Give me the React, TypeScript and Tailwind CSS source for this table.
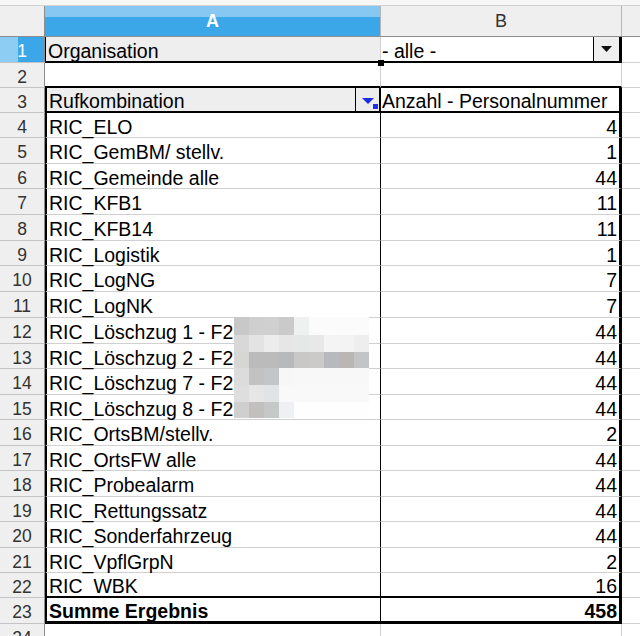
import React from 'react';

type Row = { n: number; label: string; value: number; h: string };

const dataRows: Row[] = [
  { n: 4, label: 'RIC_ELO', value: 4, h: 'h-[25px]' },
  { n: 5, label: 'RIC_GemBM/ stellv.', value: 1, h: 'h-[26px]' },
  { n: 6, label: 'RIC_Gemeinde alle', value: 44, h: 'h-[25px]' },
  { n: 7, label: 'RIC_KFB1', value: 11, h: 'h-[26px]' },
  { n: 8, label: 'RIC_KFB14', value: 11, h: 'h-[26px]' },
  { n: 9, label: 'RIC_Logistik', value: 1, h: 'h-[25px]' },
  { n: 10, label: 'RIC_LogNG', value: 7, h: 'h-[26px]' },
  { n: 11, label: 'RIC_LogNK', value: 7, h: 'h-[26px]' },
  { n: 12, label: 'RIC_Löschzug 1 - F2', value: 44, h: 'h-[26px]' },
  { n: 13, label: 'RIC_Löschzug 2 - F2', value: 44, h: 'h-[25px]' },
  { n: 14, label: 'RIC_Löschzug 7 - F2', value: 44, h: 'h-[26px]' },
  { n: 15, label: 'RIC_Löschzug 8 - F2', value: 44, h: 'h-[25px]' },
  { n: 16, label: 'RIC_OrtsBM/stellv.', value: 2, h: 'h-[26px]' },
  { n: 17, label: 'RIC_OrtsFW alle', value: 44, h: 'h-[25px]' },
  { n: 18, label: 'RIC_Probealarm', value: 44, h: 'h-[26px]' },
  { n: 19, label: 'RIC_Rettungssatz', value: 44, h: 'h-[25px]' },
  { n: 20, label: 'RIC_Sonderfahrzeug', value: 44, h: 'h-[26px]' },
  { n: 21, label: 'RIC_VpflGrpN', value: 2, h: 'h-[25px]' },
  { n: 22, label: 'RIC_WBK', value: 16, h: 'h-[25px]' },
];

// verpixelter Bereich über Zeilen 12-15
const mosaic: string[][] = [
  ['bg-[#c8c8c8]', 'bg-[#cfcfcf]', 'bg-[#d0d0d0]', 'bg-[#cacaca]', 'bg-[#eff0f0]', 'bg-[#fbfbfb]', 'bg-[#fbfbfb]', 'bg-[#fbfbfb]', 'bg-[#fbfbfb]'],
  ['bg-[#d8d8d8]', 'bg-[#e3e3e3]', 'bg-[#ececec]', 'bg-[#e6e6e6]', 'bg-[#e6e8e8]', 'bg-[#e8e8e8]', 'bg-[#f4f4f4]', 'bg-[#f3f3f3]', 'bg-[#eeeeee]'],
  ['bg-[#d6d6d4]', 'bg-[#bbbbbb]', 'bg-[#bbbbbb]', 'bg-[#b8b9bd]', 'bg-[#c9c8c6]', 'bg-[#cbcac8]', 'bg-[#b8b9bd]', 'bg-[#b9b6b4]', 'bg-[#c3c4c6]'],
  ['bg-[#dcdcdc]', 'bg-[#c2c2c2]', 'bg-[#c4c5c9]', 'bg-[#f7f7f7]', 'bg-[#f8f8f8]', 'bg-[#f8f8f8]', 'bg-[#f8f8f8]', 'bg-[#f8f8f8]', 'bg-[#f8f8f8]'],
  ['bg-[#dedede]', 'bg-[#e6e6e6]', 'bg-[#e2e3e5]', 'bg-[#f9f9f9]', 'bg-[#f9f9f9]', 'bg-[#f9f9f9]', 'bg-[#f9f9f9]', 'bg-[#f9f9f9]', 'bg-[#f9f9f9]'],
  ['bg-[#cfcfcf]', 'bg-[#c2bfbe]', 'bg-[#c4c8c6]', 'bg-[#eef0f4]', 'bg-[#fefefe]', 'bg-[#fefefe]', 'bg-[#fefefe]', 'bg-[#fefefe]', 'bg-[#fefefe]'],
];

const rowHead =
  'w-[45px] shrink-0 flex items-center justify-center pt-[3px] border-r border-r-[#8e8e8e] border-b border-b-[#c3c3c3] bg-[#efefef] text-[17.5px] text-[#333333]';

const App: React.FC = () => {
  return (
    <div className="relative w-[640px] h-[636px] overflow-hidden bg-white font-['Liberation_Sans',Arial,sans-serif] text-[19.5px] text-black leading-[24px]">
      {/* obere Leiste */}
      <div className="h-[6px] bg-[#f7f7f7] border-b border-b-[#d2d2d2]" />

      {/* Spaltenköpfe */}
      <div className="flex h-[31px] border-b border-b-[#8e8e8e] bg-[#efefef] text-[18px]">
        <div className="w-[45px] shrink-0 border-r border-r-[#8e8e8e]" />
        <div className="w-[336px] shrink-0 flex items-center justify-center border-r border-r-[#b5b5b5] bg-[linear-gradient(to_bottom,#86c8f2_36%,#3ba6e8_36%)] text-white font-bold">
          A
        </div>
        <div className="w-[241px] shrink-0 flex items-center justify-center border-r border-r-[#b5b5b5] text-[#333333]">
          B
        </div>
        <div className="flex-1" />
      </div>

      {/* Zeile 1: Seitenfeld */}
      <div className="flex h-[26px]">
        <div className="w-[45px] shrink-0 flex items-center justify-center pt-[3px] border-r border-r-[#8e8e8e] border-b border-b-[#c3c3c3] bg-[linear-gradient(to_right,#8ecdf3_40%,#3ba6e8_40%)] text-[17.5px] text-white">
          1
        </div>
        <div className="relative w-[336px] shrink-0 flex items-center pl-[2px] pt-[3px] bg-[#eeeeee] border-l border-l-black border-r border-r-[#d0d0d0] border-b-2 border-b-black">
          Organisation
          <div className="absolute -right-[4px] -bottom-[5px] w-[6px] h-[6px] bg-black" />
        </div>
        <div className="w-[241px] shrink-0 flex items-stretch pl-[1px] border-r-[3px] border-r-black border-b-2 border-b-black">
          <span className="flex items-center pt-[3px]">- alle -</span>
          <div className="ml-auto w-[26px] flex items-center justify-center bg-[#efefef] border-l border-l-black">
            <svg width="11" height="6" viewBox="0 0 11 6">
              <path d="M0 0 L11 0 L5.5 6 Z" fill="#111111" />
            </svg>
          </div>
        </div>
        <div className="flex-1 border-b border-b-[#d0d0d0]" />
      </div>

      {/* Zeile 2 */}
      <div className="flex h-[25px]">
        <div className={rowHead}>2</div>
        <div className="w-[336px] shrink-0 border-r border-r-[#d0d0d0] border-b-2 border-b-black" />
        <div className="w-[241px] shrink-0 border-r border-r-[#d0d0d0] border-b-2 border-b-black" />
        <div className="flex-1 border-b border-b-[#d0d0d0]" />
      </div>

      {/* Zeile 3: Kopf der Pivot-Tabelle */}
      <div className="flex h-[25px]">
        <div className={rowHead}>3</div>
        <div className="w-[336px] shrink-0 flex items-stretch pl-[2px] bg-[#eeeeee] border-l-2 border-l-black border-r border-r-black border-b-2 border-b-black">
          <span className="flex items-center pt-[3px]">Rufkombination</span>
          <div className="relative ml-auto w-[25px] flex items-center justify-center bg-[#ececec] border-l border-l-black border-r border-r-black">
            <svg width="12" height="6" viewBox="0 0 12 6" className="mt-[2px]">
              <path d="M0 0 L12 0 L6 6 Z" fill="#1c2be0" />
            </svg>
            <div className="absolute right-[1px] bottom-[2px] w-[5px] h-[5px] bg-[#1f2eff]" />
          </div>
        </div>
        <div className="w-[241px] shrink-0 flex items-center pl-[1px] pt-[3px] border-r-[3px] border-r-black border-b-2 border-b-black whitespace-nowrap">
          Anzahl - Personalnummer
        </div>
        <div className="flex-1 border-b border-b-[#d0d0d0]" />
      </div>

      {/* Datenzeilen */}
      {dataRows.map((r) => (
        <div key={r.n} className={`flex ${r.h}`}>
          <div className={rowHead}>{r.n}</div>
          <div
            className={`w-[336px] shrink-0 flex items-center pl-[2px] pt-[3px] border-l-2 border-l-black border-r border-r-black whitespace-nowrap ${
              r.n === 22 ? 'border-b-2 border-b-black' : 'border-b border-b-[#d0d0d0]'
            }`}
          >
            {r.label}
          </div>
          <div
            className={`w-[241px] shrink-0 flex items-center justify-end pr-[2px] pt-[3px] border-r-[3px] border-r-black ${
              r.n === 22 ? 'border-b-2 border-b-black' : 'border-b border-b-[#d0d0d0]'
            }`}
          >
            {r.value}
          </div>
          <div className="flex-1 border-b border-b-[#d0d0d0]" />
        </div>
      ))}

      {/* Zeile 23: Summe */}
      <div className="flex h-[26px] font-bold">
        <div className={`${rowHead} font-normal`}>23</div>
        <div className="w-[336px] shrink-0 flex items-center pl-[2px] pt-[3px] border-l-2 border-l-black border-r border-r-black border-b-[3px] border-b-black">
          Summe Ergebnis
        </div>
        <div className="w-[241px] shrink-0 flex items-center justify-end pr-[2px] pt-[3px] border-r-[3px] border-r-black border-b-[3px] border-b-black">
          458
        </div>
        <div className="flex-1 border-b border-b-[#d0d0d0]" />
      </div>

      {/* Zeile 24 */}
      <div className="flex h-[26px]">
        <div className={rowHead}>24</div>
        <div className="w-[336px] shrink-0 border-r border-r-[#d0d0d0]" />
        <div className="w-[241px] shrink-0 border-r border-r-[#d0d0d0]" />
        <div className="flex-1" />
      </div>

      {/* Verpixelung */}
      <div className="absolute left-[234px] top-[317px] grid grid-cols-[repeat(9,15px)] grid-rows-[18px_17px_16px_17px_17px_16px]">
        {mosaic.map((row, i) => row.map((c, j) => <div key={`${i}-${j}`} className={c} />))}
      </div>
    </div>
  );
};

export default App;
